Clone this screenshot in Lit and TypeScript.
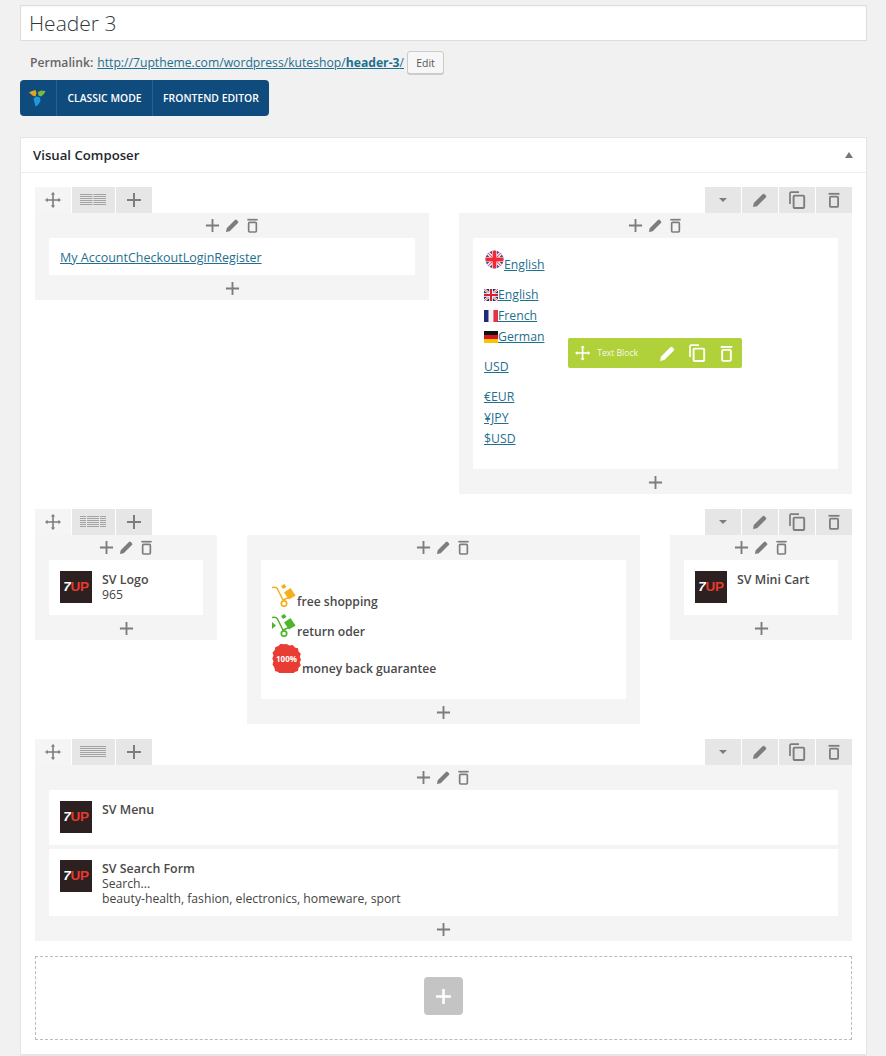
import { LitElement, html, css, svg } from "lit";
import { customElement } from "lit/decorators.js";

const plus = (s = 16, sw = 2) => html`<svg class="ic" width=${s} height=${s} viewBox="0 0 16 16"><path d="M8 1v14M1 8h14" stroke="currentColor" stroke-width=${sw} fill="none"/></svg>`;
const pencil = (s = 16) => html`<svg class="ic" width=${s} height=${s} viewBox="0 0 16 16"><path d="M1 15l.8-4L10.600 2.200a1.400 1.400 0 0 1 2 0l1.200 1.200a1.400 1.400 0 0 1 0 2L5 14.200z" fill="currentColor"/></svg>`;
const trash = (s = 16) => html`<svg class="ic" width=${s} height=${s} viewBox="0 0 16 16"><path d="M2.500 1.800h11" stroke="currentColor" stroke-width="1.800"/><rect x="3.900" y="4.600" width="8.200" height="10.300" rx="1" stroke="currentColor" stroke-width="1.800" fill="none"/></svg>`;
const copy = (s = 18) => html`<svg class="ic" width=${s} height=${s} viewBox="0 0 18 18"><path d="M2 13V2.200a1 1 0 0 1 1-1h8" stroke="currentColor" stroke-width="1.700" fill="none"/><rect x="5.600" y="4.600" width="10.600" height="12.400" rx="1" stroke="currentColor" stroke-width="1.900" fill="none"/></svg>`;
const move = (s = 16, sw = 1.6) => html`<svg class="ic" width=${s} height=${s} viewBox="0 0 16 16"><path d="M8 1v14M1 8h14" stroke="currentColor" stroke-width=${sw} fill="none"/><path d="M8 0l2.200 2.600H5.800zM8 16l2.200-2.600H5.800zM0 8l2.600-2.200v4.400zM16 8l-2.600-2.200v4.400z" fill="currentColor"/></svg>`;

const layoutIcon = (gaps: number[]) => html`<svg class="lay" width="26" height="12" viewBox="0 0 26 12">
  ${[0.5, 2.5, 4.5, 6.5, 8.5, 10.5].map((y) => svg`<path d="M0 ${y}h26" stroke="#a3a3a3" stroke-width="1"/>`)}
  ${gaps.map((x) => svg`<path d="M${x} 0v12" stroke="#e6e6e6" stroke-width="1"/>`)}
</svg>`;

const flagUk = (w: number, h: number) => html`<svg width=${w} height=${h} viewBox="0 0 14 12" class="flag">
  <rect width="14" height="12" fill="#2a2f6e"/>
  <path d="M0 0l14 12M14 0L0 12" stroke="#fff" stroke-width="2.400"/>
  <path d="M0 0l14 12M14 0L0 12" stroke="#d8334a" stroke-width=".8"/>
  <path d="M7 0v12M0 6h14" stroke="#fff" stroke-width="3.600"/>
  <path d="M7 0v12M0 6h14" stroke="#d8232f" stroke-width="2"/>
</svg>`;
const flagFr = html`<svg width="14" height="12" viewBox="0 0 14 12" class="flag"><rect width="4.700" height="12" fill="#1f2a78"/><rect x="4.700" width="4.700" height="12" fill="#f4f4f6"/><rect x="9.400" width="4.600" height="12" fill="#e0343e"/></svg>`;
const flagDe = html`<svg width="14" height="12" viewBox="0 0 14 12" class="flag"><rect width="14" height="4" fill="#111"/><rect y="4" width="14" height="4" fill="#d8141c"/><rect y="8" width="14" height="4" fill="#f7c600"/></svg>`;
const flagRound = html`<svg class="round" width="19" height="19" viewBox="0 0 19 19">
  <defs><clipPath id="rc"><circle cx="9.500" cy="9.500" r="9"/></clipPath></defs>
  <g clip-path="url(#rc)"><rect width="19" height="19" fill="#3f51a3"/>
  <path d="M0 0l19 19M19 0L0 19" stroke="#fff" stroke-width="3.400"/>
  <path d="M0 0l19 19M19 0L0 19" stroke="#ef5a66" stroke-width="1.200"/>
  <path d="M9.500 0v19M0 9.500h19" stroke="#fff" stroke-width="5"/>
  <path d="M9.500 0v19M0 9.500h19" stroke="#ee2a36" stroke-width="3.800"/></g></svg>`;

const cart = (c: string, arrow = false) => html`<svg width="24" height="24" viewBox="0 0 24 24">
  ${arrow ? svg`<path d="M0 8l4 3.500-4 3.500z" fill="${c}"/>` : ""}
  <path d="M0 3.500q4-1 5.500 1.500l5.500 11 12-5" stroke="${c}" stroke-width="1.500" fill="none"/>
  <circle cx="12" cy="19.500" r="2.700" stroke="${c}" stroke-width="1.700" fill="#fff"/>
  <path d="M12 8.500l6.500-4.500 5 7.500-6.500 4z" fill="${c}"/>
  <path d="M9 2l3.500-2 2 3-3.500 2z" fill="${c}"/>
</svg>`;
const badge = html`<svg width="29" height="29" viewBox="0 0 29 29">
  <path d="M14.500 0l3 1.600 3.300-.6 2 2.400 3.100.9.7 3.200 2.200 2.300-1 3.100 1.200 2.600-1.200 2.900 1 3.100-2.200 2.300-.7 3.200-3.100.9-2 2.400-3.300-.6-3 1.600-3-1.600-3.300.6-2-2.400-3.100-.9-.7-3.200L.500 20.400l1-3.100L.300 14.500l1.200-2.900-1-3.100L2.700 6.200l.7-3.200 3.100-.9 2-2.400 3.300.6z" fill="#e93c33"/>
  <text x="14.500" y="17.500" text-anchor="middle" class="pct">100%</text>
</svg>`;

const logo = html`<div class="logo"><span class="seven">7</span><span class="up">UP</span></div>`;
const vcLogo = html`<svg width="17" height="17" viewBox="0 0 17 17">
  <path d="M0 2.500l3-1.500 3.500-1 1 3-1 3.500-3-1z" fill="#e8a21f"/>
  <path d="M9 2l3.500-1.500 4 .5-1.500 3-3 2.500-2.500-1z" fill="#7cb93f"/>
  <path d="M4.500 8.500l3-2 3.500 1 .5 3.500-2.500 4-2.500 1.500-1-4z" fill="#1f9bd9"/>
</svg>`;

@customElement("app-root")
export class AppRoot extends LitElement {
  static styles = css`
    :host { display: block; background: #f1f1f1; font-family: "Open Sans", sans-serif; font-size: 12.200px; color: #444; height: 1056px; overflow: hidden; }
    * { box-sizing: border-box; }
    .page { padding: 5px 19px 0 20px; }
    .ic { display: block; }
    .flag { display: block; flex: none; }
    .lay { margin-right: 2px; }
    a { color: #1f6f8f; text-decoration: underline; }
    .title { height: 36px; background: #fff; border: 1px solid #ddd; font-size: 21px; line-height: 34px; padding-left: 8px; color: #32373c; font-weight: 300; box-shadow: inset 0 1px 2px rgba(0,0,0,.04); }
    .perma { display: flex; align-items: center; height: 23px; margin-top: 10px; padding-left: 10px; color: #666; font-size: 12.180px; gap: 3px; }
    .perma > b { font-weight: 600; margin-right: 1px; }
    .edit { font-size: 10.500px; height: 23px; width: 37px; display: flex; align-items: center; justify-content: center; border: 1px solid #ccc; border-radius: 3px; background: #f7f7f7; box-shadow: 0 1px 0 #ccc; color: #555; }
    .vc { margin-top: 6px; display: inline-flex; height: 36px; width: 249px; background: #0f4b7d; border-radius: 4px; color: #fff; font-size: 10.400px; font-weight: 600; align-items: stretch; vertical-align: top; }
    .vc > div { display: flex; align-items: center; justify-content: center; }
    .vc .l { width: 37px; border-right: 1px solid #2a5f8c; padding-right: 2px; }
    .vc .m { width: 96px; border-right: 1px solid #2a5f8c; }
    .vc .n { flex: 1; }
    .panel { margin-top: 21px; background: #fff; border: 1px solid #e5e5e5; box-shadow: 0 1px 1px rgba(0,0,0,.04); height: 918px; }
    .phead { height: 35px; border-bottom: 1px solid #eee; display: flex; align-items: center; justify-content: space-between; padding: 0 13px 0 12px; font-size: 13.200px; font-weight: 600; color: #23282d; }
    .tri { width: 0; height: 0; border-left: 4.500px solid transparent; border-right: 4.500px solid transparent; border-bottom: 6px solid #72777c; }
    .body { padding: 14px 14px 0; display: flex; flex-direction: column; gap: 15px; }
    .bar { display: flex; justify-content: space-between; height: 26px; }
    .tabs { display: flex; gap: 1px; color: #7d7d7d; }
    .tab { width: 36px; height: 26px; background: #e6e6e6; display: flex; align-items: center; justify-content: center; }
    .tab.w { width: 43px; }
    .tab.mv { background: #f5f5f5; }
    .cols { display: grid; gap: 30px; align-items: start; }
    .c2 { grid-template-columns: 394px 393px; }
    .c3 { grid-template-columns: 182px 393px 182px; }
    .c1 { grid-template-columns: 1fr; }
    .col { background: #f4f4f4; position: relative; padding: 0 14px; }
    .ctl { height: 25px; display: flex; justify-content: center; align-items: center; color: #7d7d7d; }
    .ctl > span { width: 20px; display: flex; justify-content: center; }
    .ctl.b { padding-top: 1px; }
    .el { background: #fff; padding: 11px; color: #444; line-height: 15px; }
    .el + .el { margin-top: 4px; }
    .thumb { display: flex; gap: 10px; min-height: 55px; padding-bottom: 10px; }
    .t { padding-top: 1px; }
    .name { font-weight: 600; color: #4a4a4a; font-size: 12.400px; }
    .logo { width: 32px; height: 32px; background: #2c2020; flex: none; display: flex; align-items: center; justify-content: center; font: 900 13.500px/1 "Liberation Sans", sans-serif; letter-spacing: -.3px; }
    .seven { color: #fff; font-style: italic; }
    .up { color: #e83a2e; }
    .links { height: 37px; display: flex; align-items: center; font-size: 12.500px; padding-top: 12px; }
    .lang { padding: 10px 11px 20px; line-height: 21px; height: 231px; font-size: 12.250px; }
    .lead { display: flex; align-items: flex-end; height: 27px; }
    .round { margin-bottom: 6px; flex: none; margin-left: 1px; }
    .group { margin-top: 9px; }
    .ln { display: flex; align-items: center; height: 21px; }
    .ship { padding: 24px 11px 21px; height: 139px; display: flex; flex-direction: column; gap: 3px; font-weight: 600; font-size: 12.150px; color: #4a4a4a; }
    .s { display: flex; align-items: flex-end; line-height: 21px; }
    .s svg { flex: none; margin-bottom: 3px; }
    .s.big svg { margin-bottom: 5px; }
    .s span { margin-left: 1px; position: relative; top: 1px; }
    .pct { font: 700 8px "Open Sans", sans-serif; fill: #fff; }
    .float { position: absolute; left: 109px; top: 125px; width: 174px; height: 30px; background: #b0d13a; border-radius: 2px; color: #fff; display: flex; align-items: center; padding: 0 7px 0 7px; font-size: 8.600px; }
    .float .lbl { margin-left: 7px; width: 65px; opacity: .9; }
    .float .ics { display: flex; align-items: center; gap: 12px; }
    .add { height: 84px; border: 1px dashed #bbb; display: flex; align-items: center; justify-content: center; padding-bottom: 4px; }
    .addbtn { width: 39px; height: 38px; border-radius: 4px; background: #c4c4c4; color: #fff; display: flex; align-items: center; justify-content: center; }
  `;

  private bar(gaps: number[]) {
    return html`<div class="bar">
      <div class="tabs">
        <div class="tab mv">${move(16)}</div>
        <div class="tab w">${layoutIcon(gaps)}</div>
        <div class="tab">${plus(16)}</div>
      </div>
      <div class="tabs">
        <div class="tab"><svg width="8" height="4" viewBox="0 0 8 4"><path d="M0 0h8L4 4z" fill="#7d7d7d"/></svg></div>
        <div class="tab">${pencil(16)}</div>
        <div class="tab">${copy(18)}</div>
        <div class="tab">${trash(16)}</div>
      </div>
    </div>`;
  }

  private top() {
    return html`<div class="ctl"><span>${plus(15)}</span><span>${pencil(15)}</span><span>${trash(15)}</span></div>`;
  }
  private bottom() {
    return html`<div class="ctl b">${plus(15)}</div>`;
  }

  render() {
    return html`<div class="page">
      <div class="title">Header 3</div>
      <div class="perma"><b>Permalink:</b> <a href="#">http://7uptheme.com/wordpress/kuteshop/<b>header-3</b>/</a><div class="edit">Edit</div></div>
      <div class="vc"><div class="l">${vcLogo}</div><div class="m">CLASSIC MODE</div><div class="n">FRONTEND EDITOR</div></div>
      <div class="panel">
        <div class="phead"><span>Visual Composer</span><span class="tri"></span></div>
        <div class="body">
          <div>
            ${this.bar([13])}
            <div class="cols c2">
              <div class="col">${this.top()}<div class="el links"><a href="#">My AccountCheckoutLoginRegister</a></div>${this.bottom()}</div>
              <div class="col">${this.top()}
                <div class="el lang">
                  <div class="lead">${flagRound}<a href="#">English</a></div>
                  <div class="group">
                    <div class="ln">${flagUk(14, 12)}<a href="#">English</a></div>
                    <div class="ln">${flagFr}<a href="#">French</a></div>
                    <div class="ln">${flagDe}<a href="#">German</a></div>
                  </div>
                  <div class="group"><div class="ln"><a href="#">USD</a></div></div>
                  <div class="group">
                    <div class="ln"><a href="#">€EUR</a></div>
                    <div class="ln"><a href="#">¥JPY</a></div>
                    <div class="ln"><a href="#">$USD</a></div>
                  </div>
                </div>
                ${this.bottom()}
                <div class="float">${move(16, 1.8)}<span class="lbl">Text Block</span><div class="ics">${pencil(17)}${copy(18)}${trash(17)}</div></div>
              </div>
            </div>
          </div>
          <div>
            ${this.bar([6.5, 19.5])}
            <div class="cols c3">
              <div class="col">${this.top()}<div class="el thumb">${logo}<div class="t"><div class="name">SV Logo</div><div>965</div></div></div>${this.bottom()}</div>
              <div class="col">${this.top()}
                <div class="el ship">
                  <div class="s">${cart("#f2b01e")}<span>free shopping</span></div>
                  <div class="s">${cart("#4fb52c", true)}<span>return oder</span></div>
                  <div class="s big">${badge}<span>money back guarantee</span></div>
                </div>
                ${this.bottom()}
              </div>
              <div class="col">${this.top()}<div class="el thumb">${logo}<div class="t"><div class="name">SV Mini Cart</div></div></div>${this.bottom()}</div>
            </div>
          </div>
          <div>
            ${this.bar([])}
            <div class="cols c1">
              <div class="col">${this.top()}
                <div class="el thumb">${logo}<div class="t"><div class="name">SV Menu</div></div></div>
                <div class="el thumb">${logo}<div class="t"><div class="name">SV Search Form</div><div>Search...</div><div>beauty-health, fashion, electronics, homeware, sport</div></div></div>
                ${this.bottom()}
              </div>
            </div>
          </div>
          <div class="add"><div class="addbtn">${plus(17, 2.4)}</div></div>
        </div>
      </div>
    </div>`;
  }
}
